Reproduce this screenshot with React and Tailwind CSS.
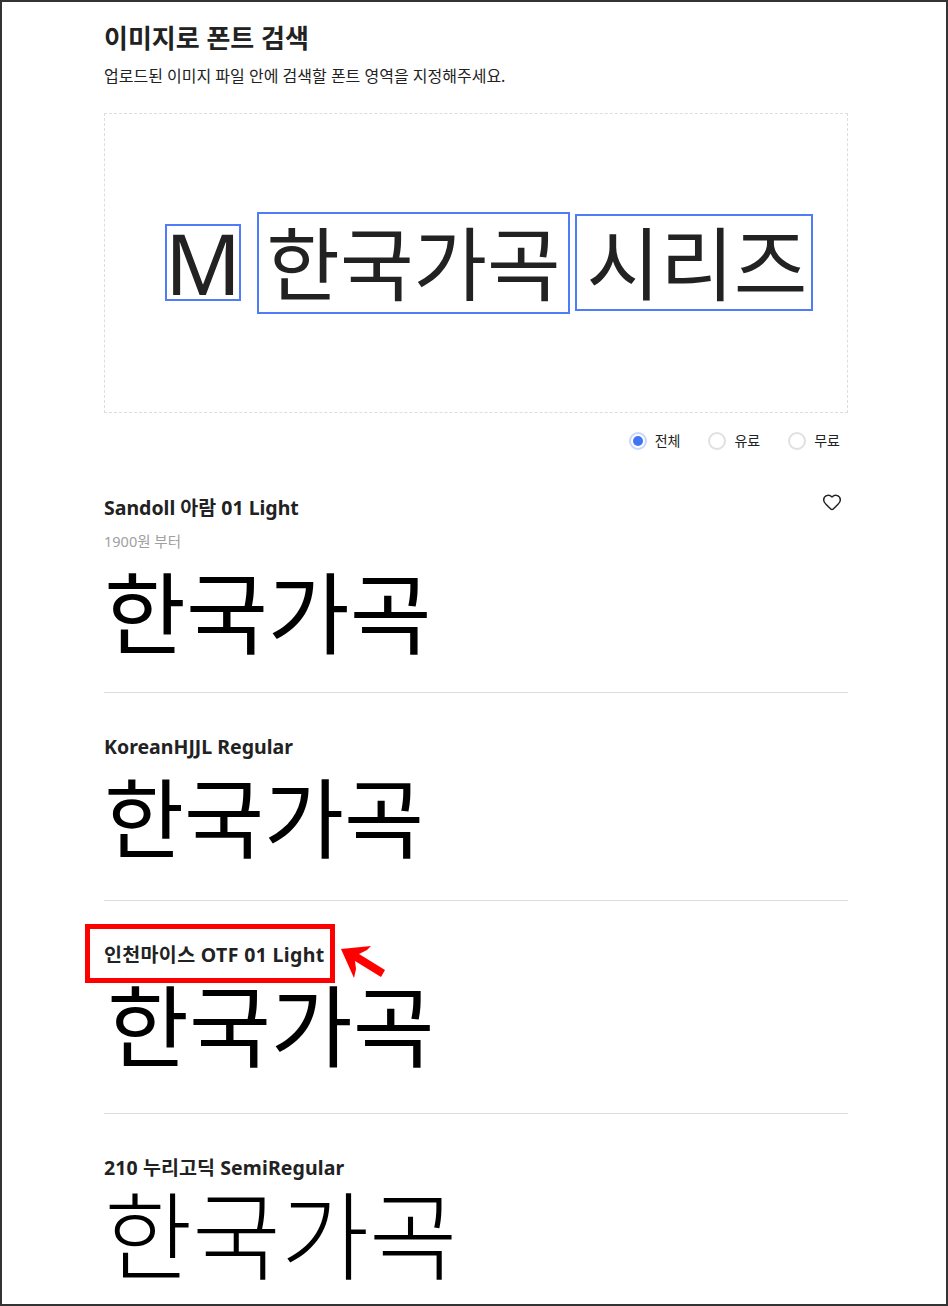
import { Heart } from 'lucide-react';

const FONT = "font-['Noto_Sans','Noto_Sans_CJK_KR',sans-serif]";

const Radio = ({ label, checked }) => (
  <div className="flex items-center gap-[8px]">
    {checked ? (
      <span className="w-[18px] h-[18px] rounded-full border-2 border-[#c9d7fd] flex items-center justify-center">
        <span className="w-[10px] h-[10px] rounded-full bg-[#3f76f6]" />
      </span>
    ) : (
      <span className="w-[18px] h-[18px] rounded-full border-2 border-[#e0e0e0]" />
    )}
    <span className="text-[14px] leading-[18px] text-[#222]">{label}</span>
  </div>
);

const FontRow = ({ name, price, sample, heart, className, sampleClass, nameClass, highlight }) => (
  <div className={`relative border-b border-[#dddddd] ${className}`}>
    {highlight && (
      <>
        <div className="absolute left-[-19px] top-[23px] w-[250px] h-[59px] border-[5px] border-[#ff0000]" />
        <svg className="absolute left-[235px] top-[44px]" width="48" height="40" viewBox="0 0 48 40">
          <path d="M2 4 L32 1 L28 5 L20 9 L46 25 L42 32 L16 16 L17 24 L15 33 Z" fill="#ff0000" />
        </svg>
      </>
    )}
    {heart && (
      <Heart className="absolute right-[6px] top-[-2px] w-[20px] h-[20px] text-[#222]" strokeWidth={1.8} />
    )}
    <h3 className={`text-[19.5px] leading-[28px] font-bold text-[#222] ${nameClass || ''}`}>{name}</h3>
    {price && <p className="text-[14.5px] leading-[18px] mt-[10px] text-[#a0a0a0]">{price}</p>}
    <div className={`whitespace-nowrap text-black ${sampleClass}`}>{sample}</div>
  </div>
);

export default function App() {
  return (
    <div className={`w-[948px] h-[1306px] overflow-hidden border-2 border-[#333333] bg-white ${FONT}`}>
      <div className="pl-[102px] pr-[98px] pt-[18px]">
        <h1 className="text-[26px] leading-[36px] font-bold text-[#222]">이미지로 폰트 검색</h1>
        <p className="mt-[9px] text-[16px] leading-[22px] text-[#222]">업로드된 이미지 파일 안에 검색할 폰트 영역을 지정해주세요.</p>

        {/* uploaded image preview */}
        <div className="relative mt-[26px] h-[300px] border border-dashed border-[#dddddd]">
          <span className="absolute left-[60px] top-[110px] w-[76px] h-[77px] border-2 border-[#4f7df9] flex items-center justify-center text-[84px] leading-[72px] text-[#222] blur-[0.6px]">M</span>
          <span className="absolute left-[152px] top-[98px] w-[313px] h-[102px] border-2 border-[#4f7df9] flex items-center justify-center text-[80px] leading-[98px] text-[#222] whitespace-nowrap blur-[0.6px]">한국가곡</span>
          <span className="absolute left-[470px] top-[100px] w-[238px] h-[97px] border-2 border-[#4f7df9] flex items-center justify-center pl-[6px] text-[80px] leading-[93px] text-[#222] whitespace-nowrap blur-[0.6px]">시리즈</span>
        </div>

        <div className="flex justify-end gap-[28px] mt-[19px] pr-[8px]">
          <Radio label="전체" checked />
          <Radio label="유료" />
          <Radio label="무료" />
        </div>

        <FontRow
          className="mt-[44px] h-[199px]"
          name="Sandoll 아람 01 Light"
          price="1900원 부터"
          sample="한국가곡"
          heart
          sampleClass="text-[89px] leading-[100px] mt-[13px]"
        />
        <FontRow
          className="pt-[40px] h-[208px]"
          name="KoreanHJJL Regular"
          sample="한국가곡"
          sampleClass="text-[87px] leading-[100px] mt-[7px]"
        />
        <FontRow
          highlight
          className="pt-[40px] h-[213px]"
          name="인천마이스 OTF 01 Light"
          nameClass="tracking-[0.35px]"
          sample="한국가곡"
          sampleClass="text-[89px] leading-[100px] ml-[3px] mt-[7px]"
        />
        <div className="pt-[40px]">
          <h3 className="text-[19.5px] leading-[28px] font-bold text-[#222] tracking-[0.1px]">210 누리고딕 SemiRegular</h3>
          <div className="text-[96px] leading-[110px] font-light whitespace-nowrap text-black mt-[-2px]">한국가곡</div>
        </div>
      </div>
    </div>
  );
}
